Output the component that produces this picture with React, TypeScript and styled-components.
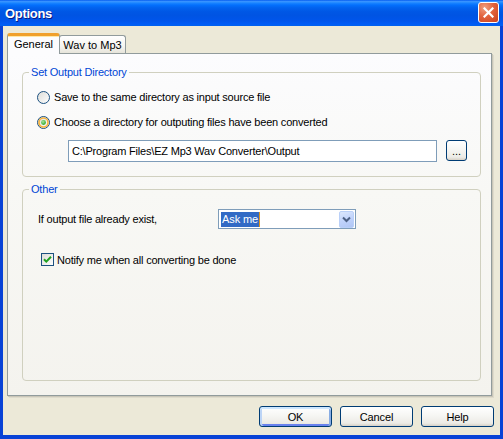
import React from 'react'
import styled, { createGlobalStyle } from 'styled-components'

const GlobalStyle = createGlobalStyle`
  html, body {
    margin: 0;
    padding: 0;
    background: #ECE9D8;
  }
  body {
    font-family: 'Liberation Sans', Arial, sans-serif;
    font-size: 11px;
    color: #000;
  }
`

const Window = styled.div`
  width: 503px;
  height: 439px;
  display: flex;
  flex-direction: column;
  overflow: hidden;
`

const TitleBar = styled.div`
  height: 26px;
  flex: none;
  display: flex;
  align-items: center;
  justify-content: space-between;
  padding: 0 4px 0 5px;
  box-sizing: border-box;
  background: linear-gradient(
    180deg,
    #0058ee 0%,
    #3a93ff 5%,
    #288eff 9%,
    #127dff 14%,
    #036ffc 20%,
    #0262ee 30%,
    #0057e5 45%,
    #0054e3 60%,
    #0055eb 80%,
    #005bf5 92%,
    #0062ef 100%
  );
`

const Title = styled.span`
  font-family: 'Liberation Sans', Arial, sans-serif;
  font-weight: 700;
  font-size: 13px;
  letter-spacing: -0.3px;
  color: #fff;
  text-shadow: 1px 1px 0 #0a1883;
`

const CloseButton = styled.div`
  width: 21px;
  height: 21px;
  box-sizing: border-box;
  border: 1px solid #fff;
  border-radius: 3px;
  background: radial-gradient(circle at 30% 25%, #f0a080 0%, #e2633d 45%, #c9401d 100%);
  display: flex;
  align-items: center;
  justify-content: center;
  margin-top: -1px;
`

const Frame = styled.div`
  flex: 1;
  display: flex;
  flex-direction: column;
  background: #ece9d8;
  border-left: 3px solid #0842d6;
  border-right: 3px solid #0842d6;
  border-bottom: 4px solid #0842d6;
  padding: 7px 6px 8px 4px;
  min-height: 0;
`

const TabStrip = styled.div`
  height: 20px;
  flex: none;
  display: flex;
  align-items: flex-end;
  position: relative;
  z-index: 1;
`

const Tab = styled.div<{ $active?: boolean; $width: number }>`
  width: ${(p) => p.$width}px;
  box-sizing: border-box;
  display: flex;
  align-items: center;
  justify-content: center;
  border: 1px solid #919b9c;
  border-bottom: none;
  border-radius: 3px 3px 0 0;
  ${(p) =>
    p.$active
      ? `
    height: 21px;
    margin-bottom: -1px;
    background: #fcfcfe;
    border-top: 3px solid #ffc83c;
    box-shadow: inset 0 1px 0 #ffe8a8;
    border-top-color: #f0a02c;
    position: relative;
    z-index: 2;
    padding-bottom: 2px;
  `
      : `
    height: 18px;
    margin-left: -1px;
    background: linear-gradient(180deg, #ffffff 0%, #f5f4f0 60%, #e6e4da 100%);
    padding-bottom: 0;
  `}
`

const Panel = styled.div`
  flex: 1;
  display: flex;
  flex-direction: column;
  gap: 6px;
  margin-right: 2px;
  border: 1px solid #919b9c;
  box-shadow: 1px 1px 0 #c9c6b8, 2px 2px 0 #dedbcc;
  background: linear-gradient(180deg, #fcfcfe 0%, #f8f8f5 40%, #f4f3ee 100%);
  padding: 12px 10px 14px 14px;
  min-height: 0;
`

const Group = styled.fieldset<{ $grow?: boolean }>`
  margin: 0;
  padding: 0;
  border: 1px solid #d0d0bf;
  border-radius: 4px;
  min-width: 0;
  ${(p) => (p.$grow ? 'flex: 1;' : 'flex: none;')}
`

const Legend = styled.legend`
  margin-left: 6px;
  padding: 0 2px;
  font-size: 11px;
  line-height: 13px;
  color: #0046d5;
  letter-spacing: -0.2px;
`

const GroupBody = styled.div<{ $top: number; $left: number }>`
  display: flex;
  flex-direction: column;
  padding: ${(p) => p.$top}px 13px 14px ${(p) => p.$left}px;
`

const OptionRow = styled.label<{ $gap?: number }>`
  display: flex;
  align-items: center;
  gap: 4px;
  height: 16px;
  margin-top: ${(p) => p.$gap ?? 0}px;
  letter-spacing: -0.2px;
  white-space: nowrap;
`

const PathRow = styled.div`
  display: flex;
  gap: 9px;
  margin: 10px 0 0 31px;
`

const PathInput = styled.div`
  width: 369px;
  height: 22px;
  box-sizing: border-box;
  border: 1px solid #7f9db9;
  background: #fff;
  display: flex;
  align-items: center;
  padding-left: 3px;
  letter-spacing: -0.2px;
  white-space: nowrap;
`

const Button = styled.div<{ $default?: boolean; $width: number; $height: number }>`
  width: ${(p) => p.$width}px;
  height: ${(p) => p.$height}px;
  box-sizing: border-box;
  border: 1px solid #003c74;
  border-radius: 3px;
  background: linear-gradient(180deg, #ffffff 0%, #f6f6f3 45%, #ecebe6 85%, #d6d0c5 100%);
  display: flex;
  align-items: center;
  justify-content: center;
  letter-spacing: -0.1px;
  ${(p) =>
    p.$default
      ? `box-shadow: inset 0 2px 0 #cee7ff, inset 2px 0 0 #bcd4f6, inset -2px 0 0 #89ade4, inset 0 -2px 0 #6982ee;`
      : ''}
`

const SettingRow = styled.div`
  display: flex;
  align-items: center;
`

const SettingLabel = styled.span`
  width: 180px;
  letter-spacing: -0.2px;
  white-space: nowrap;
`

const Select = styled.div`
  width: 138px;
  height: 20px;
  box-sizing: border-box;
  border: 1px solid #7f9db9;
  background: #fff;
  display: flex;
  align-items: center;
  justify-content: space-between;
  padding: 1px;
  padding-left: 2px;
`

const Selected = styled.span`
  background: #316ac5;
  color: #fff;
  padding: 1px 1px 1px 1px;
  border-right: 1px solid #e0951e;
  line-height: 13px;
  letter-spacing: -0.1px;
`

const DropButton = styled.div`
  width: 15px;
  height: 17px;
  border-radius: 2px;
  background: linear-gradient(160deg, #dce8fd 0%, #c1d3fb 50%, #b0c6f5 100%);
  border: 1px solid #bad0f8;
  box-sizing: border-box;
  display: flex;
  align-items: center;
  justify-content: center;
`

const CheckRow = styled.label`
  display: flex;
  align-items: center;
  gap: 3px;
  height: 15px;
  margin: 23px 0 0 3px;
  letter-spacing: -0.2px;
  white-space: nowrap;
`

const ButtonBar = styled.div`
  display: flex;
  justify-content: flex-end;
  gap: 8px;
  margin-top: 10px;
  flex: none;
`

const Radio: React.FC<{ checked?: boolean }> = ({ checked }) => (
  <svg width="13" height="13" viewBox="0 0 13 13">
    <defs>
      <linearGradient id="rg" x1="0" y1="0" x2="1" y2="1">
        <stop offset="0" stopColor="#dcdcd7" />
        <stop offset="1" stopColor="#ffffff" />
      </linearGradient>
      <radialGradient id="dot" cx="0.4" cy="0.35" r="0.7">
        <stop offset="0" stopColor="#a6e79a" />
        <stop offset="1" stopColor="#21a121" />
      </radialGradient>
    </defs>
    <circle cx="6.5" cy="6.5" r="6" fill="url(#rg)" stroke="#1c5180" strokeWidth="1" />
    {checked && (
      <>
        <circle cx="6.5" cy="6.5" r="4.5" fill="none" stroke="#f8b33a" strokeWidth="1.6" />
        <circle cx="6.5" cy="6.5" r="2.4" fill="url(#dot)" />
      </>
    )}
  </svg>
)

const Checkbox: React.FC = () => (
  <svg width="13" height="13" viewBox="0 0 13 13">
    <defs>
      <linearGradient id="cg" x1="0" y1="0" x2="1" y2="1">
        <stop offset="0" stopColor="#dcdcd7" />
        <stop offset="1" stopColor="#ffffff" />
      </linearGradient>
    </defs>
    <rect x="0.5" y="0.5" width="12" height="12" fill="url(#cg)" stroke="#1c5180" />
    <path d="M3 6.2 L5.3 8.6 L10 3.8" fill="none" stroke="#21a121" strokeWidth="2" />
  </svg>
)

const App: React.FC = () => {
  return (
    <>
      <GlobalStyle />
      <Window>
        <TitleBar>
          <Title>Options</Title>
          <CloseButton>
            <svg width="11" height="11" viewBox="0 0 11 11">
              <path d="M1.5 1.5 L9.5 9.5 M9.5 1.5 L1.5 9.5" stroke="#fff" strokeWidth="2.2" strokeLinecap="square" />
            </svg>
          </CloseButton>
        </TitleBar>
        <Frame>
          <TabStrip>
            <Tab $active $width={53}>General</Tab>
            <Tab $width={67}>Wav to Mp3</Tab>
          </TabStrip>
          <Panel>
            <Group>
              <Legend>Set Output Directory</Legend>
              <GroupBody $top={10} $left={14}>
                <OptionRow>
                  <Radio />
                  Save to the same directory as input source file
                </OptionRow>
                <OptionRow $gap={9}>
                  <Radio checked />
                  Choose a directory for outputing files have been converted
                </OptionRow>
                <PathRow>
                  <PathInput>C:\Program Files\EZ Mp3 Wav Converter\Output</PathInput>
                  <Button $width={21} $height={21}>...</Button>
                </PathRow>
              </GroupBody>
            </Group>
            <Group $grow>
              <Legend>Other</Legend>
              <GroupBody $top={13} $left={15}>
                <SettingRow>
                  <SettingLabel>If output file already exist,</SettingLabel>
                  <Select>
                    <Selected>Ask me</Selected>
                    <DropButton>
                      <svg width="9" height="7" viewBox="0 0 9 7">
                        <path d="M1 1.5 L4.5 5 L8 1.5" fill="none" stroke="#4d6185" strokeWidth="2" />
                      </svg>
                    </DropButton>
                  </Select>
                </SettingRow>
                <CheckRow>
                  <Checkbox />
                  Notify me when all converting be done
                </CheckRow>
              </GroupBody>
            </Group>
          </Panel>
          <ButtonBar>
            <Button $default $width={73} $height={21}>OK</Button>
            <Button $width={73} $height={21}>Cancel</Button>
            <Button $width={73} $height={21}>Help</Button>
          </ButtonBar>
        </Frame>
      </Window>
    </>
  )
}

export default App
